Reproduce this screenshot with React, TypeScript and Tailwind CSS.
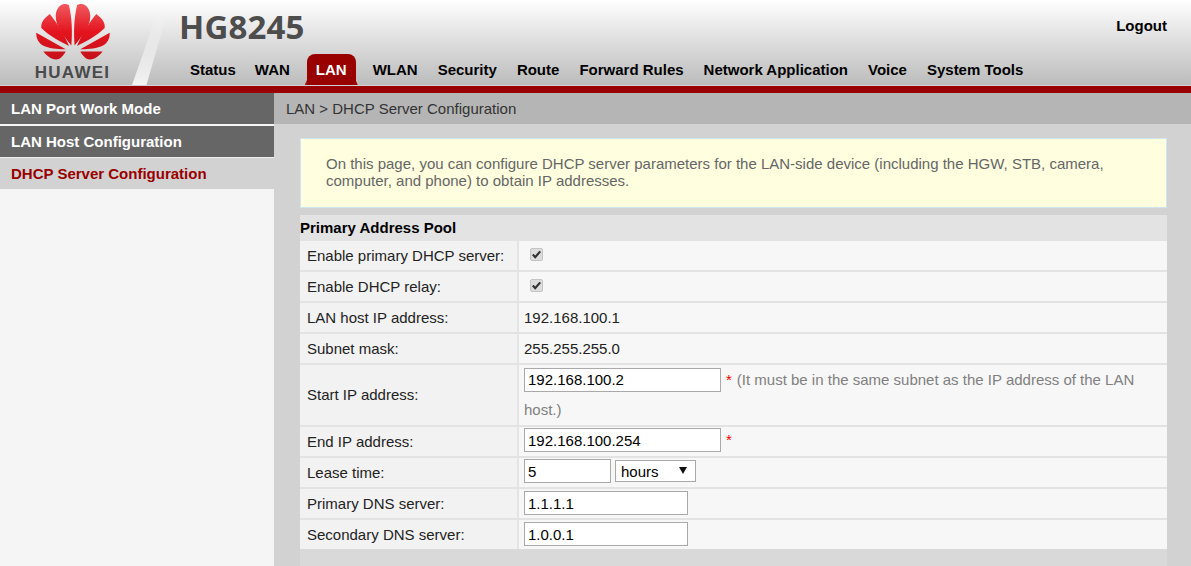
import React from "react";

const font = { fontFamily: '"Liberation Sans", Arial, sans-serif' };

function Logo() {
  const petals = [
    "M-1.7 45.5 C-9 36 -17.5 26 -17.3 16 C-17.2 9 -13 4 -8.5 4 C-6 4 -4.5 4.5 -4 5.5 C-1 18 -0.5 33 -1.7 45.5 Z",
    "M-4 46 C-10 31 -17 22 -23.3 14 C-27 17 -31.7 21 -31.7 26 L-31.7 28 C-25 35 -12 42 -4 46 Z",
    "M-7.3 49.3 L-36.7 32.7 C-37 38 -34.5 43 -30 45.5 C-24 48.5 -14 49.5 -7.3 49.3 Z",
    "M-7.3 51.5 L-29.7 51.5 C-27 55 -22 59.5 -17 59.5 C-13 59.5 -10 56 -7.3 51.5 Z",
  ];
  return (
    <svg width="80" height="62" viewBox="-40 0 80 62" className="block">
      <defs>
        <linearGradient id="pg" gradientUnits="userSpaceOnUse" x1="0" y1="4" x2="0" y2="60">
          <stop offset="0" stopColor="#ef5a60" />
          <stop offset="0.5" stopColor="#e4141e" />
          <stop offset="1" stopColor="#c5111a" />
        </linearGradient>
      </defs>
      <g fill="url(#pg)">
        {petals.map((d) => <path key={d} d={d} />)}
      </g>
      <g fill="url(#pg)" transform="scale(-1 1)">
        {petals.map((d) => <path key={d} d={d} />)}
      </g>
    </svg>
  );
}

function Check() {
  return (
    <span className="relative block h-[13px] w-[13px]">
      <input type="checkbox" defaultChecked disabled className="block h-[13px] w-[13px] appearance-none rounded-[2px] border border-[#c4c4c4] bg-[#dddddd]" />
      <svg viewBox="0 0 13 13" className="absolute left-0 top-0 h-[13px] w-[13px]">
        <path d="M2.8 6.6 L5.2 9.2 L10.2 3.4" fill="none" stroke="#333333" strokeWidth="2.2" />
      </svg>
    </span>
  );
}

function Field({ value, w, mb = "mb-[3px]" }: { value: string; w: string; mb?: string }) {
  return (
    <input
      readOnly
      value={value}
      className={`${w} ${mb} h-6 border border-[#a9a9a9] bg-white px-[3px] text-[15px] text-black outline-none`}
      style={font}
    />
  );
}

function Row({ label, h, children }: { label: string; h: string; children: React.ReactNode }) {
  return (
    <div className={`mt-[2px] flex ${h}`}>
      <div className="flex w-[217px] shrink-0 items-center bg-[#f2f2f2] pl-[7px] pt-[1px] text-[15px] text-[#222]">{label}</div>
      <div className="flex min-w-0 flex-1 items-center border-l-2 border-[#e4e4e4] bg-[#f7f7f7] pl-[5px] text-[15px] text-[#222]">{children}</div>
    </div>
  );
}

const nav = ["Status", "WAN", "LAN", "WLAN", "Security", "Route", "Forward Rules", "Network Application", "Voice", "System Tools"];

export default function App() {
  return (
    <div className="h-[566px] w-[1191px] overflow-hidden bg-[#d2d2d2]" style={font}>
      <header className="relative flex h-[85px] bg-gradient-to-b from-white to-[#bcbcbc]">
        <div className="absolute left-[132px] top-[3px] h-[82px] w-[38px] bg-gradient-to-t from-[#f4f4f4] to-transparent [clip-path:polygon(0_100%,76%_0,100%_0,38%_100%)]" />
        <div className="relative flex w-[147px] shrink-0 flex-col items-center">
          <div className="ml-[-2px]"><Logo /></div>
          <span className="ml-[-2px] mt-[1px] text-[17px] font-bold leading-[20px] tracking-[1.25px] text-[#4a4a4a]">HUAWEI</span>
        </div>
        <div className="relative flex min-w-0 flex-1 flex-col">
          <div className="flex h-[54px] items-start justify-between pl-[32px] pr-[24px]">
            <h1 className="mt-[6px] text-[33px] font-bold leading-[42px] tracking-[0.15px] text-[#4d4d4d]" style={{ fontFamily: '"Open Sans", sans-serif' }}>HG8245</h1>
            <a className="mt-[18px] text-[15px] font-bold leading-4 text-black">Logout</a>
          </div>
          <nav className="flex h-[31px] items-center gap-5 pl-[43px]">
            {nav.map((n) =>
              n === "LAN" ? (
                <span key={n} className="relative mx-[-3px] flex h-[31px] items-center rounded-t-[8px] bg-[#990000] px-[9px] pt-[1px] text-[15px] font-bold text-white before:absolute before:bottom-0 before:left-[-2px] before:h-[5px] before:w-[2px] before:bg-[#990000] before:[clip-path:polygon(100%_0,100%_100%,0_100%)] after:absolute after:bottom-0 after:right-[-2px] after:h-[5px] after:w-[2px] after:bg-[#990000] after:[clip-path:polygon(0_0,100%_100%,0_100%)]">{n}</span>
              ) : n === "Status" ? (
                <span key={n} className="mr-[-1px] pt-[1px] text-[15px] font-bold text-black">{n}</span>
              ) : (
                <span key={n} className="pt-[1px] text-[15px] font-bold text-black">{n}</span>
              )
            )}
          </nav>
        </div>
      </header>
      <div className="mt-[1px] h-[7px] bg-[#990000]" />
      <div className="flex">
        <aside className="h-[473px] w-[274px] shrink-0 bg-[#f5f5f5] text-[15px] font-bold">
          <div className="flex h-[31px] items-center bg-[#666666] pl-[11px] pt-[1px] text-white">LAN Port Work Mode</div>
          <div className="mt-[2px] flex h-[31px] items-center bg-[#666666] pl-[11px] pt-[1px] text-white">LAN Host Configuration</div>
          <div className="flex h-[32px] items-center border-t border-[#eeeeee] bg-[#d2d2d2] pl-[11px] pt-[1px] text-[#990000]">DHCP Server Configuration</div>
        </aside>
        <main className="flex min-w-0 flex-1 flex-col">
          <div className="flex h-[31px] items-center bg-[#b5b5b5] pl-[12px] pt-[1px] text-[15px] text-[#333]">LAN &gt; DHCP Server Configuration</div>
          <div className="flex flex-1 flex-col pl-[26px] pr-[24px] pt-[14px]">
            <div className="flex h-[70px] flex-col justify-center border border-[#cfe6ee] bg-[#ffffe0] pb-[2px] pl-[25px] pr-[40px] text-[15px] leading-[17px] text-[#666666]">
              On this page, you can configure DHCP server parameters for the LAN-side device (including the HGW, STB, camera, computer, and phone) to obtain IP addresses.
            </div>
            <section className="mt-[7px] flex-1 bg-[#d9d9d9]">
              <div className="bg-[#e3e3e3]">
                <div className="flex h-[25px] items-center pt-[1px] text-[15px] font-bold text-black">Primary Address Pool</div>
                <div className="-mt-[1px]">
                  <Row label="Enable primary DHCP server:" h="h-[29px]"><span className="mb-[3px] ml-[6px]"><Check /></span></Row>
                  <Row label="Enable DHCP relay:" h="h-[29px]"><span className="mb-[3px] ml-[6px]"><Check /></span></Row>
                  <Row label="LAN host IP address:" h="h-[29px]"><span className="pt-[1px]">192.168.100.1</span></Row>
                  <Row label="Subnet mask:" h="h-[29px]"><span className="pt-[1px]">255.255.255.0</span></Row>
                  <Row label="Start IP address:" h="h-[60px]">
                    <div className="leading-[30px]">
                      <Field value="192.168.100.2" w="w-[197px]" />
                      <span className="ml-[5px] text-[#ff0000]">*</span>
                      <span className="ml-[5px] text-[#808080]">(It must be in the same subnet as the IP address of the LAN host.)</span>
                    </div>
                  </Row>
                  <Row label="End IP address:" h="h-[29px]">
                    <Field value="192.168.100.254" w="w-[197px]" />
                    <span className="mb-[3px] ml-[5px] text-[#ff0000]">*</span>
                  </Row>
                  <Row label="Lease time:" h="h-[29px]">
                    <Field value="5" w="w-[87px]" />
                    <span className="relative mb-[3px] ml-[4px] block">
                      <select className="block h-[22px] w-[81px] appearance-none rounded-none border border-[#a9a9a9] bg-white pl-[5px] text-[15px] text-black" defaultValue="hours">
                        <option>hours</option>
                      </select>
                      <svg viewBox="0 0 8 7" className="absolute left-[64px] top-[7px] h-[7px] w-[8px]"><path d="M0 0H8L4 7Z" fill="#111" /></svg>
                    </span>
                  </Row>
                  <Row label="Primary DNS server:" h="h-[29px]"><Field value="1.1.1.1" w="w-[164px]" mb="mb-[1px]" /></Row>
                  <Row label="Secondary DNS server:" h="h-[29px]"><Field value="1.0.0.1" w="w-[164px]" mb="mb-[1px]" /></Row>
                </div>
              </div>
            </section>
          </div>
        </main>
      </div>
    </div>
  );
}
